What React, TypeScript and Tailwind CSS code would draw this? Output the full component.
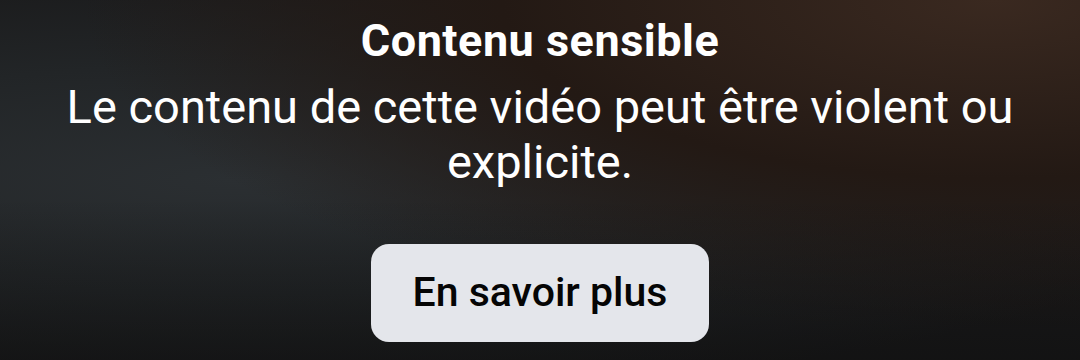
export default function App() {
  return (
    <div
      className="relative flex h-[360px] w-[1080px] flex-col items-center overflow-hidden bg-[#1a1a1b] text-center"
      style={{ fontFamily: "Roboto, 'Noto Sans', sans-serif" }}
    >
      <div className="absolute inset-0 bg-[radial-gradient(ellipse_at_22%_50%,#2b2f32_0%,#222527_45%,transparent_85%)]" />
      <div className="absolute inset-0 bg-[radial-gradient(ellipse_at_92%_0%,#3a2920_0%,#231914_35%,transparent_65%)]" />
      <div className="absolute inset-0 bg-[linear-gradient(to_bottom,transparent_55%,rgba(8,8,8,0.4))]" />
      <div className="relative flex flex-col items-center">
        <h1 className="mt-[16px] text-[45px] font-bold leading-[50px] tracking-[0.5px] text-white">
          Contenu sensible
        </h1>
        <p className="mt-[13px] w-[1000px] text-[47px] leading-[55px] text-white">
          Le contenu de cette vidéo peut être violent ou explicite.
        </p>
        <button className="mt-[55px] flex h-[98px] w-[338px] items-center justify-center rounded-[18px] bg-[#e4e6eb] text-[41px] font-medium text-[#050505]">
          En savoir plus
        </button>
      </div>
    </div>
  );
}
